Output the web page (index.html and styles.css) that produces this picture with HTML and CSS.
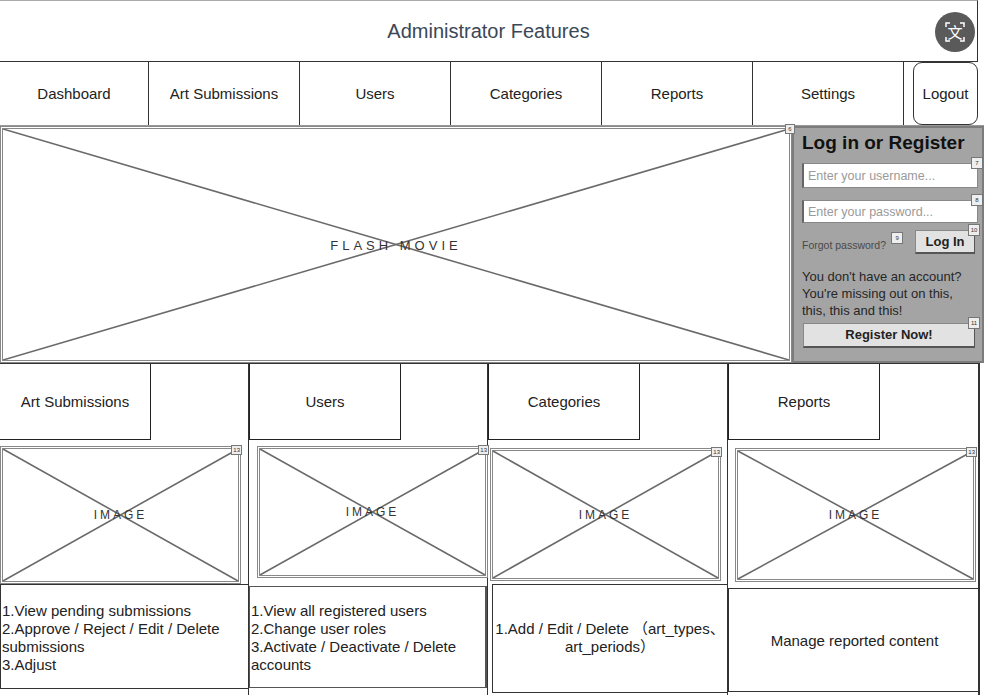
FILE: index.html
```html
<!DOCTYPE html>
<html lang="en">
<head>
  <meta charset="UTF-8">
  <title>Administrator Features</title>
  <link rel="stylesheet" href="styles.css">
</head>
<body>

  <div class="header">
    <span class="title">Administrator Features</span>
    <div class="translate">
      <svg width="40" height="40" viewBox="0 0 40 40">
        <circle cx="20" cy="20" r="20" fill="#5a5a5a"/>
        <path d="M11 15v-4h4M25 11h4v4M29 25v4h-4M15 29h-4v-4" stroke="#fff" stroke-width="1.5" fill="none"/>
        <text x="20" y="25.5" text-anchor="middle" font-size="15" fill="#fff" font-family="Noto Sans CJK SC, sans-serif">文</text>
      </svg>
    </div>
  </div>

  <div class="nav">
    <div class="nav-item first">Dashboard</div>
    <div class="nav-item">Art Submissions</div>
    <div class="nav-item">Users</div>
    <div class="nav-item">Categories</div>
    <div class="nav-item">Reports</div>
    <div class="nav-item">Settings</div>
    <div class="logout">Logout</div>
  </div>

  <div class="hero">
    <div class="flash">
      <svg class="cross" viewBox="0 0 100 100" preserveAspectRatio="none">
        <line x1="0" y1="0" x2="100" y2="100"/>
        <line x1="0" y1="100" x2="100" y2="0"/>
      </svg>
      <span class="ph-label">FLASH MOVIE</span>
      <span class="badge badge-flash">6</span>
    </div>

    <div class="login">
      <h3>Log in or Register</h3>
      <div class="field">
        <div class="input">Enter your username...</div>
        <span class="badge badge-field">7</span>
      </div>
      <div class="field second">
        <div class="input">Enter your password...</div>
        <span class="badge badge-field">8</span>
      </div>
      <div class="login-row">
        <span class="forgot">Forgot password?<span class="badge badge-forgot">9</span></span>
        <span class="btn btn-login">Log In<span class="badge badge-btn">10</span></span>
      </div>
      <p class="pitch">You don't have an account?<br>You're missing out on this,<br>this, this and this!</p>
      <div class="btn btn-register">Register Now!<span class="badge badge-btn">11</span></div>
    </div>
  </div>

  <div class="features">
    <div class="col col-art">
      <div class="tab">Art Submissions</div>
      <div class="image">
        <svg class="cross" viewBox="0 0 100 100" preserveAspectRatio="none">
          <line x1="0" y1="0" x2="100" y2="100"/>
          <line x1="0" y1="100" x2="100" y2="0"/>
        </svg>
        <span class="ph-label small">IMAGE</span>
        <span class="badge">13</span>
      </div>
      <div class="desc">1.View pending submissions<br>2.Approve / Reject / Edit / Delete submissions<br>3.Adjust</div>
    </div>

    <div class="col col-users">
      <div class="tab">Users</div>
      <div class="image">
        <svg class="cross" viewBox="0 0 100 100" preserveAspectRatio="none">
          <line x1="0" y1="0" x2="100" y2="100"/>
          <line x1="0" y1="100" x2="100" y2="0"/>
        </svg>
        <span class="ph-label small">IMAGE</span>
        <span class="badge">13</span>
      </div>
      <div class="desc">1.View all registered users<br>2.Change user roles<br>3.Activate / Deactivate / Delete accounts</div>
    </div>

    <div class="col col-cats">
      <div class="tab">Categories</div>
      <div class="image">
        <svg class="cross" viewBox="0 0 100 100" preserveAspectRatio="none">
          <line x1="0" y1="0" x2="100" y2="100"/>
          <line x1="0" y1="100" x2="100" y2="0"/>
        </svg>
        <span class="ph-label small">IMAGE</span>
        <span class="badge">13</span>
      </div>
      <div class="desc center">1.Add / Edit / Delete （art_types、art_periods）</div>
    </div>

    <div class="col col-reports">
      <div class="tab">Reports</div>
      <div class="image">
        <svg class="cross" viewBox="0 0 100 100" preserveAspectRatio="none">
          <line x1="0" y1="0" x2="100" y2="100"/>
          <line x1="0" y1="100" x2="100" y2="0"/>
        </svg>
        <span class="ph-label small">IMAGE</span>
        <span class="badge">13</span>
      </div>
      <div class="desc center">Manage reported content</div>
    </div>
  </div>

</body>
</html>
```

FILE: styles.css
```css
body {
  margin: 0;
  width: 984px;
  height: 695px;
  overflow: hidden;
  background: #ffffff;
  font-family: "Liberation Sans", Arial, "Noto Sans CJK SC", sans-serif;
  color: #222;
}

/* header */
.header {
  position: relative;
  box-sizing: border-box;
  width: 978px;
  height: 62px;
  border: 1px solid #333;
  border-top-color: #aaa;
  border-left: none;
  display: flex;
  align-items: center;
  justify-content: center;
}
.title {
  font-size: 20px;
  color: #3b4756;
}
.translate {
  position: absolute;
  right: 2px;
  top: 11px;
  width: 40px;
  height: 40px;
}

/* nav */
.nav {
  display: flex;
  height: 63px;
}
.nav-item {
  box-sizing: border-box;
  width: 151px;
  border-right: 1px solid #333;
  display: flex;
  align-items: center;
  justify-content: center;
  font-size: 15px;
}
.nav-item.first {
  width: 149px;
}
.logout {
  box-sizing: border-box;
  width: 65px;
  margin-left: 9px;
  border: 1px solid #333;
  border-radius: 9px;
  display: flex;
  align-items: center;
  justify-content: center;
  font-size: 15px;
}

/* hero */
.hero {
  display: flex;
  height: 237px;
  border-top: 1px solid #999;
}
.flash {
  position: relative;
  box-sizing: border-box;
  width: 792px;
  border: 3px double #888;
}
.cross {
  position: absolute;
  left: 0;
  top: 0;
  width: 100%;
  height: 100%;
}
.cross line {
  stroke: #6a6a6a;
  stroke-width: 1.6;
  vector-effect: non-scaling-stroke;
}
.ph-label {
  position: absolute;
  left: 0;
  right: 0;
  top: 50%;
  transform: translateY(-50%);
  text-align: center;
  font-size: 13px;
  letter-spacing: 4px;
  color: #333;
}
.ph-label.small {
  font-size: 12px;
  letter-spacing: 3px;
}
.badge {
  position: absolute;
  right: -4px;
  top: -4px;
  box-sizing: border-box;
  min-width: 10px;
  height: 10px;
  padding: 0 1px;
  background: #eee;
  border: 1px solid #777;
  font-size: 6px;
  line-height: 8px;
  text-align: center;
  color: #333;
  letter-spacing: 0;
  font-weight: 400;
}
.badge-flash {
  right: -6px;
  top: -5px;
}

/* login */
.login {
  box-sizing: border-box;
  width: 192px;
  background: #a4a4a4;
  border: 2px solid #7c7c7c;
  padding: 4px 4px 0 8px;
}
.login h3 {
  margin: 0 0 9px;
  font-size: 19px;
  line-height: 22px;
  font-weight: 700;
  color: #111;
  white-space: nowrap;
}
.field {
  position: relative;
  margin-bottom: 12px;
}
.input {
  box-sizing: border-box;
  height: 25px;
  background: #fff;
  border: 1px solid #888;
  border-left: 2px solid #666;
  font-size: 12.5px;
  color: #9a9a9a;
  padding: 5px 4px 0;
  white-space: nowrap;
  overflow: hidden;
}
.field.second {
  margin-bottom: 7px;
}
.field.second .input {
  height: 23px;
  padding-top: 4px;
}
.badge-field {
  right: -5px;
  top: -6px;
  width: 12px;
  height: 12px;
  line-height: 10px;
}
.login-row {
  display: flex;
  justify-content: space-between;
  align-items: center;
  padding-right: 3px;
}
.forgot {
  position: relative;
  font-size: 10.5px;
  color: #4a4a4a;
  padding-top: 6px;
}
.badge-forgot {
  right: -17px;
  top: -1px;
  width: 12px;
  height: 12px;
  line-height: 10px;
}
.btn {
  position: relative;
  box-sizing: border-box;
  background: #e2e2e2;
  border: 1px solid #888;
  border-right-color: #555;
  border-bottom: 2px solid #555;
  font-size: 13px;
  font-weight: 700;
  color: #222;
  text-align: center;
  white-space: nowrap;
}
.btn-login {
  width: 60px;
  height: 24px;
  line-height: 21px;
}
.badge-btn {
  right: -6px;
  top: -7px;
  width: 12px;
  height: 12px;
  line-height: 10px;
}
.pitch {
  margin: 14px 0 4px;
  font-size: 13px;
  line-height: 17px;
  color: #262626;
  white-space: nowrap;
}
.btn-register {
  height: 25px;
  line-height: 22px;
  margin-right: 3px;
  margin-left: 1px;
}

/* feature columns */
.features {
  display: grid;
  grid-template-columns: 248px 239px 240px 251px;
  box-sizing: border-box;
  width: 980px;
  height: 335px;
  border-top: 1px solid #333;
  border-right: 2px solid #333;
}
.col {
  border-left: 1px solid #333;
}
.col-art {
  border-left: none;
}
.tab {
  box-sizing: border-box;
  width: 152px;
  height: 76px;
  border: 1px solid #222;
  border-top: none;
  display: flex;
  align-items: center;
  justify-content: center;
  font-size: 15px;
}
.col-art .tab {
  width: 151px;
  border-left: none;
}
.image {
  position: relative;
  box-sizing: border-box;
  width: 230px;
  height: 132px;
  margin-top: 7px;
  border: 3px double #888;
}
.desc {
  box-sizing: border-box;
  border: 1px solid #333;
  font-size: 15px;
  line-height: 18px;
  color: #222;
  padding: 17px 2px 0 1px;
}
.desc.center {
  display: flex;
  align-items: center;
  justify-content: center;
  text-align: center;
  padding: 0 1px;
}
.col-art .image {
  width: 241px;
  height: 138px;
  margin-top: 6px;
}
.col-art .desc {
  width: 249px;
  height: 105px;
  margin-top: 0;
  padding-top: 17px;
}
.col-users .image {
  width: 231px;
  height: 132px;
  margin-left: 8px;
  margin-top: 6px;
}
.col-users .desc {
  width: 238px;
  height: 102px;
  margin-top: 8px;
  padding-top: 15px;
  border-color: #555;
  border-right: 2px double #555;
}
.col-cats .image {
  width: 231px;
  height: 133px;
  margin-left: 2px;
  margin-top: 8px;
}
.col-cats .desc {
  width: 236px;
  height: 109px;
  margin-left: 4px;
  margin-top: 3px;
  padding-bottom: 2px;
}
.col-reports .image {
  width: 241px;
  height: 134px;
  margin-left: 7px;
  margin-top: 8px;
}
.col-reports .desc {
  width: 252px;
  height: 104px;
  margin-top: 6px;
  border-right: none;
  padding-top: 2px;
}
```
